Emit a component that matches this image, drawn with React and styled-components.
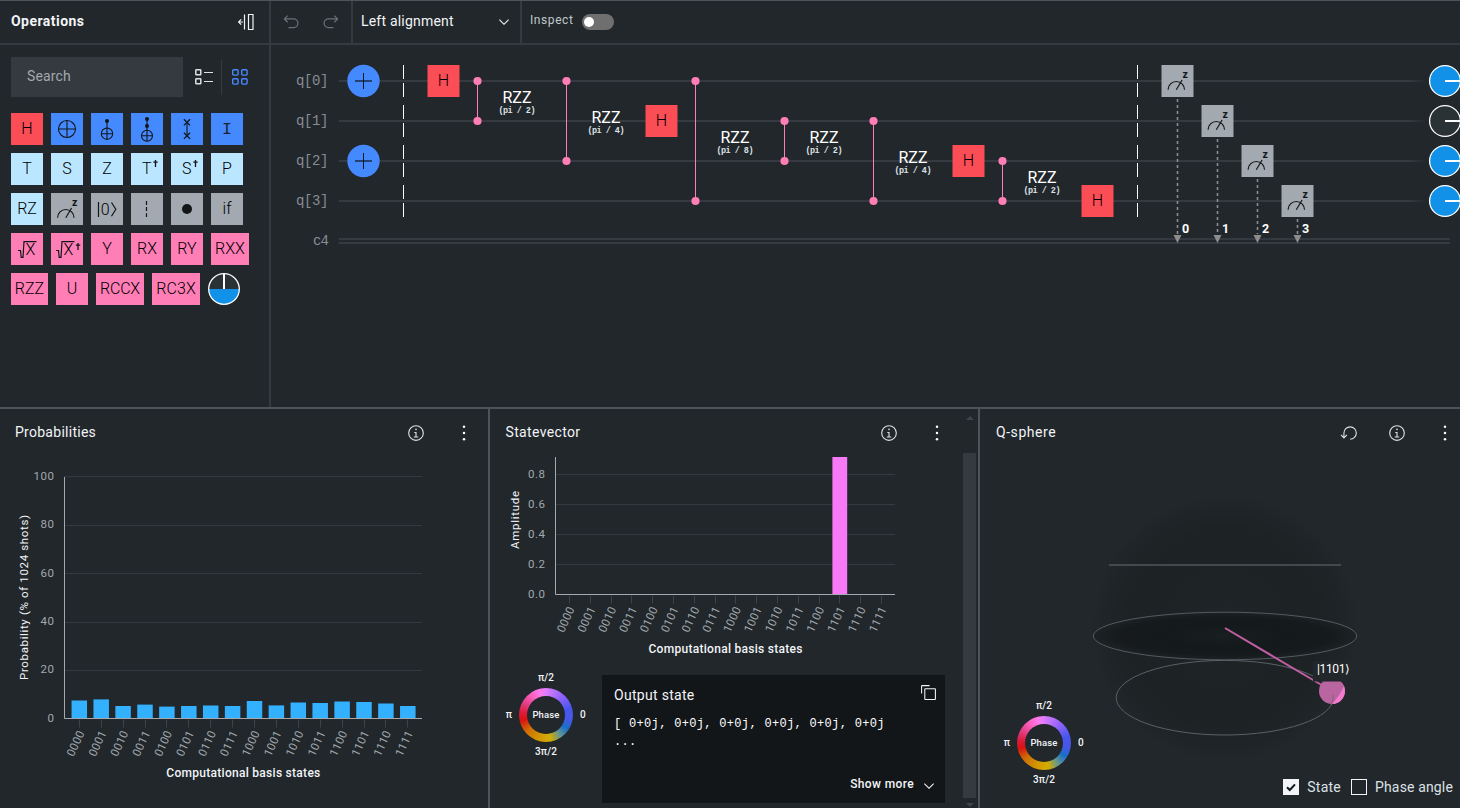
import React from "react";
import styled, { createGlobalStyle, css } from "styled-components";

const sans = `Roboto, "Liberation Sans", sans-serif`;
const mono = `"Liberation Mono", monospace`;

const GlobalStyle = createGlobalStyle`
  * { box-sizing: border-box; }
  body { margin: 0; background: #21272a; color: #f2f4f8; font-family: ${sans}; font-size: 14px; overflow: hidden; }
  svg { display: block; }
`;

const Page = styled.div`
  width: 1460px;
  height: 808px;
  display: flex;
  flex-direction: column;
  border-top: 1px solid #4d5358;
  overflow: hidden;
`;
const Workspace = styled.div`
  display: flex;
  height: 406px;
`;
const Sidebar = styled.aside`
  width: 271px;
  border-right: 2px solid #343a3f;
`;
const Bar = styled.header`
  height: 44px;
  display: flex;
  align-items: center;
  border-bottom: 2px solid #343a3f;
`;
const SidebarBar = styled(Bar)`
  justify-content: space-between;
  padding: 0 15px 1px 11px;
`;
const SidebarTitle = styled.h2`
  margin: 0;
  padding-bottom: 2px;
  font-size: 14px;
  font-weight: 700;
  letter-spacing: 0.46px;
`;
const Tools = styled.div`
  display: flex;
  align-items: center;
  padding: 12px 0 0 11px;
`;
const Search = styled.div`
  width: 172px;
  height: 40px;
  padding: 0 16px 2px;
  display: flex;
  align-items: center;
  background: #343a3f;
  color: #a2a9b0;
  letter-spacing: 0.16px;
`;
const ViewButton = styled.button`
  width: ${(p) => (p.$divider ? 39 : 38)}px;
  height: 35px;
  padding: 0 0 0 ${(p) => p.$left}px;
  border: 0;
  border-right: ${(p) => (p.$divider ? "1px solid #343a3f" : "0")};
  background: none;
  color: ${(p) => (p.$active ? "#4589ff" : "#dde1e6")};
`;
const Palette = styled.div`
  display: flex;
  flex-wrap: wrap;
  gap: 8px;
  width: 242px;
  margin: 16px 0 0 11px;
`;
const gateColors = {
  red: "#fa4d56",
  blue: "#4589ff",
  light: "#bae6ff",
  gray: "#a2a9b0",
  pink: "#ff7eb6",
};
const Gate = styled.div`
  width: ${(p) => p.$w || 32}px;
  height: 32px;
  padding-bottom: 1px;
  display: flex;
  align-items: center;
  justify-content: center;
  background: ${(p) => gateColors[p.$tone]};
  color: #000;
  font-size: 16px;
  font-weight: 300;
  letter-spacing: ${(p) => p.$ls || 0}px;
  ${(p) => p.$glyph && css`padding-bottom: 0;`}
`;
const Main = styled.main`
  width: 1189px;
`;
const IconButton = styled.button`
  width: 40px;
  height: 42px;
  padding: 0;
  border: 0;
  background: none;
  display: flex;
  align-items: center;
  justify-content: center;
  color: ${(p) => p.$color || "#dde1e6"};
`;
const History = styled.div`
  display: flex;
  width: 82px;
  height: 42px;
  border-right: 2px solid #343a3f;
`;
const Alignment = styled.div`
  width: 169px;
  height: 42px;
  display: flex;
  align-items: center;
  justify-content: space-between;
  padding: 0 8px 0 8px;
  border-right: 2px solid #343a3f;
  letter-spacing: 0.2px;
  span { padding-bottom: 2px; }
`;
const Inspect = styled.label`
  display: flex;
  align-items: center;
  gap: 8px;
  padding-left: 8px;
  font-size: 12px;
  letter-spacing: 0.58px;
  color: #c1c7cd;
  span { padding-bottom: 4px; margin-right: 1px; }
`;
const Toggle = styled.i`
  width: 32px;
  height: 16px;
  border-radius: 8px;
  background: #6f6f6f;
  padding: 3px 2px;
  &::after {
    content: "";
    display: block;
    width: 10px;
    height: 10px;
    border-radius: 50%;
    background: #fff;
  }
`;
const Results = styled.div`
  display: flex;
  height: 401px;
  border-top: 2px solid #4d5358;
`;
const Panel = styled.section`
  position: relative;
  display: flex;
  width: ${(p) => p.$w}px;
  border-right: ${(p) => (p.$last ? "0" : "2px solid #4d5358")};
  overflow: hidden;
`;
const PanelBody = styled.div`
  flex: 1;
  min-width: 0;
  display: flex;
  flex-direction: column;
`;
const PanelHeader = styled.header`
  height: 48px;
  display: flex;
  align-items: center;
  padding-left: ${(p) => p.$left}px;
  margin-right: ${(p) => p.$right || 0}px;
`;
const PanelTitle = styled.h3`
  flex: 1;
  margin: 0 0 2px;
  font-size: 14px;
  font-weight: 400;
  letter-spacing: ${(p) => p.$ls}px;
`;
const PanelButton = styled(IconButton)`
  width: 48px;
  height: 48px;
`;
const ScrollTrack = styled.div`
  width: 15px;
  display: flex;
  flex-direction: column;
  justify-content: space-between;
  padding: 7px 2px 1px 0;
`;
const Thumb = styled.div`
  flex: 1;
  margin: 33px 0 5px;
  background: #343a3f;
`;
const Arrow = styled.div`
  align-self: center;
  border: 4px solid transparent;
  border-${(p) => (p.$up ? "bottom" : "top")}-color: #3e454a;
  border-${(p) => (p.$up ? "top" : "bottom")}-width: 0;
`;
const OutputRow = styled.div`
  display: flex;
  padding: 15px 18px 0 9px;
`;
const Output = styled.div`
  width: 343px;
  height: 128px;
  margin-left: 9px;
  padding: 9px 8px 11px 12px;
  background: #121619;
  display: flex;
  flex-direction: column;
`;
const OutputHead = styled.div`
  display: flex;
  justify-content: space-between;
  height: 31px;
  line-height: 22px;
  letter-spacing: 0.3px;
`;
const Code = styled.pre`
  margin: 0;
  flex: 1;
  font: 12px/18px ${mono};
  letter-spacing: 0.32px;
  color: #fff;
`;
const ShowMore = styled.div`
  display: flex;
  justify-content: flex-end;
  align-items: center;
  gap: 7px;
  font-size: 12px;
  font-weight: 500;
  letter-spacing: 0.38px;
  svg { position: relative; top: 2px; }
`;
const Legend = styled.div`
  display: grid;
  grid-template: 20px 54px 20px / 20px 54px 20px;
  width: 94px;
  height: 94px;
  place-items: center;
  flex: none;
  font-size: 10px;
  margin-top: ${(p) => p.$mt || 0}px;
`;
const LegendText = styled.span`
  grid-column: ${(p) => p.$col};
  grid-row: ${(p) => p.$row};
  padding-bottom: 1px;
  letter-spacing: 0.1px;
  font-weight: 500;
`;
const Wheel = styled.div`
  grid-area: 2 / 2;
  width: 54px;
  height: 54px;
  padding: 8px;
  border-radius: 50%;
  background: conic-gradient(#dd7cff 0deg, #8d62fa 42deg, #4757ee 75deg, #4757e8 100deg, #186fc8 122deg, #64968f 145deg, #d4ac00 170deg, #d29a00 195deg, #cf6e05 230deg, #da1212 258deg, #dc1c3a 276deg, #e23f88 300deg, #ff66c8 328deg, #ff7aec 345deg, #dd7cff 360deg);
`;
const WheelHole = styled.div`
  width: 38px;
  height: 38px;
  padding-bottom: 1px;
  border-radius: 50%;
  background: #21272a;
  display: flex;
  align-items: center;
  justify-content: center;
  font-size: 9.5px;
  font-weight: 500;
  letter-spacing: 0.15px;
`;
const SphereLegend = styled.div`
  position: absolute;
  left: 17px;
  bottom: 18px;
`;
const Options = styled.div`
  position: absolute;
  right: 7px;
  bottom: 13px;
  display: flex;
  align-items: center;
  gap: 10px;
`;
const Option = styled.label`
  display: flex;
  align-items: center;
  gap: 8px;
  letter-spacing: ${(p) => p.$ls}px;
  color: #dde1e6;
`;
const Box = styled.span`
  width: 16px;
  height: 16px;
  border: 1px solid #f2f4f8;
  background: ${(p) => (p.$on ? "#f2f4f8" : "transparent")};
  color: #121619;
`;

const Icon = ({ size = 16, box = 32, children }) => (
  <svg width={size} height={size} viewBox={`0 0 ${box} ${box}`} fill="currentColor">{children}</svg>
);
const UndoIcon = () => (
  <Icon size={20}><path d="M20,10H7.8149l3.5874-3.5859L10,5,4,11,10,17l1.4023-1.415L7.8179,12H20a6,6,0,0,1,0,12H12v2h8a8,8,0,0,0,0-16Z" /></Icon>
);
const RedoIcon = () => (
  <Icon size={20}><path d="M12,10H24.1851L20.5977,6.4141,22,5,28,11,22,17,20.5977,15.5854,24.1821,12H12a6,6,0,0,0,0,12h8v2H12a8,8,0,0,1,0-16Z" /></Icon>
);
const ChevronIcon = () => (
  <Icon box={16}><path d="M8 11L3 6 3.7 5.3 8 9.6 12.3 5.3 13 6z" /></Icon>
);
const InfoIcon = () => (
  <Icon size={18}>
    <path d="M17 22V14H13V16H15V22H12V24H20V22zM16,8a1.5,1.5,0,1,0,1.5,1.5A1.5,1.5,0,0,0,16,8Z" />
    <path d="M16,30A14,14,0,1,1,30,16,14,14,0,0,1,16,30ZM16,4A12,12,0,1,0,28,16,12,12,0,0,0,16,4Z" />
  </Icon>
);
const ResetIcon = () => (
  <Icon size={18}><path d="M18,28A12,12,0,1,0,6,16v6.2L2.4,18.6,1,20l6,6,6-6-1.4-1.4L8,22.2V16H8A10,10,0,1,1,18,26Z" /></Icon>
);
const CopyIcon = () => (
  <Icon size={17}>
    <path d="M28,10V28H10V10H28m0-2H10a2,2,0,0,0-2,2V28a2,2,0,0,0,2,2H28a2,2,0,0,0,2-2V10a2,2,0,0,0-2-2Z" />
    <path d="M4,18H2V4A2,2,0,0,1,4,2H18V4H4Z" />
  </Icon>
);
const DotsIcon = () => (
  <Icon box={16}>{[1.7, 8, 14.3].map((y) => <circle key={y} cx="8" cy={y} r="1.25" />)}</Icon>
);
const CollapseIcon = () => (
  <Icon box={16}>
    <path d="M6.5 0.5V15.5M10.5 0.5H15V15.5H10.5ZM0.8 8H5M3.2 5.3L0.6 8L3.2 10.7" fill="none" stroke="currentColor" strokeWidth="1.2" />
  </Icon>
);
const ListIcon = () => (
  <svg width="18" height="16" fill="none" stroke="currentColor" strokeWidth="1.5">
    <rect x="0.8" y="0.8" width="5" height="5" rx="0.6" /><rect x="0.8" y="9.8" width="5" height="5" rx="0.6" />
    <path d="M9 3.5H18M9 12.5H18" strokeWidth="1" />
  </svg>
);
const GridIcon = () => (
  <svg width="16" height="16" fill="none" stroke="currentColor" strokeWidth="1.4">
    {[0.7, 9.7].map((x) => [0.7, 9.7].map((y) => <rect key={`${x}-${y}`} x={x} y={y} width="5.4" height="5.4" rx="1" />))}
  </svg>
);

const Glyph = ({ children }) => (
  <svg width="32" height="32" fill="none" stroke="#121619" strokeWidth="1.1">{children}</svg>
);
const Label = ({ x, y, size = 16, w, fill = "#121619", anchor = "middle", family = sans, weight = 400, transform, children }) => (
  <text x={x} y={y} fontFamily={family} fontSize={size} fontWeight={weight} fill={fill} stroke="none"
    textAnchor={anchor} textLength={w} lengthAdjust={w ? "spacing" : undefined} transform={transform}>{children}</text>
);
const Target = ({ cy, r }) => (
  <><circle cx="16" cy={cy} r={r} /><path d={`M${16 - r} ${cy}H${16 + r}M16 ${cy - r}V${cy + r}`} /></>
);
const Meter = () => (
  <>
    <path d="M6.6 24.7A8.2 8.2 0 0 1 23 24.7M14.8 24.7L20.6 15" fill="none" stroke="#121619" strokeWidth="1.2" />
    <Label x={23.6} y={13} size={10.5} weight={700}>z</Label>
  </>
);
const Dagger = ({ letter }) => (
  <Glyph><Label x={15.8} y={21.2} weight={300} fill="#000">{letter}</Label><path d="M24.5 7V14M22.3 9.2H26.7" strokeWidth="1.3" /></Glyph>
);

const gates = [
  { tone: "red", text: "H" },
  { tone: "blue", glyph: <Glyph><Target cy={16} r={8.5} /></Glyph> },
  { tone: "blue", glyph: <Glyph><circle cx="16" cy="8" r="2" fill="#121619" stroke="none" /><path d="M16 8V15" /><Target cy={20.7} r={5.7} /></Glyph> },
  { tone: "blue", glyph: <Glyph><circle cx="16" cy="6" r="2" fill="#121619" stroke="none" /><circle cx="16" cy="13" r="2" fill="#121619" stroke="none" /><path d="M16 6V18" /><Target cy={22.8} r={5.5} /></Glyph> },
  { tone: "blue", glyph: <Glyph><path d="M16 9.3V22.8" /><path d="M12.9 6.2l6.2 6.2m0-6.2l-6.2 6.2M12.9 19.7l6.2 6.2m0-6.2l-6.2 6.2" strokeWidth="1.3" /></Glyph> },
  { tone: "blue", glyph: <Glyph><Label x={16} y={21.2} size={16.5} family={mono} fill="#1c2433">I</Label></Glyph> },
  { tone: "light", text: "T" },
  { tone: "light", text: "S" },
  { tone: "light", text: "Z" },
  { tone: "light", glyph: <Dagger letter="T" /> },
  { tone: "light", glyph: <Dagger letter="S" /> },
  { tone: "light", text: "P" },
  { tone: "light", text: "RZ" },
  { tone: "gray", glyph: <Glyph><Meter /></Glyph> },
  { tone: "gray", glyph: <Glyph><path d="M7.5 9V24M20.5 9.5L24.8 16.3L20.5 23.2" strokeWidth="1.2" /><Label x={14.2} y={21.6} w={8} weight={300} fill="#000">0</Label></Glyph> },
  { tone: "gray", glyph: <Glyph><path d="M15.5 8V24" strokeDasharray="4 2.1" strokeWidth="1.2" /></Glyph> },
  { tone: "gray", glyph: <Glyph><circle cx="16" cy="16" r="5" fill="#121619" stroke="none" /></Glyph> },
  { tone: "gray", text: "if" },
  { tone: "pink", glyph: <Glyph><path d="M7 17.5H9.5L10.2 24.3H12L13 8.7H25.5" strokeWidth="1.2" /><Label x={19.3} y={21.8} weight={300} fill="#000">X</Label></Glyph> },
  { tone: "pink", glyph: <Glyph><path d="M5 17.5H7.5L8.2 24.3H10L11 8.7H23.5" strokeWidth="1.2" /><Label x={17.4} y={21.8} weight={300} fill="#000">X</Label><path d="M27 10V17M24.8 12.2H29.2" strokeWidth="1.3" /></Glyph> },
  { tone: "pink", text: "Y" },
  { tone: "pink", text: "RX" },
  { tone: "pink", text: "RY" },
  { tone: "pink", text: "RXX", w: 38 },
  { tone: "pink", text: "RZZ", w: 37 },
  { tone: "pink", text: "U" },
  { tone: "pink", text: "RCCX", w: 48, ls: -0.2 },
  { tone: "pink", text: "RC3X", w: 48, ls: 0.1 },
];
const PhaseDisk = () => (
  <svg width="32" height="32">
    <circle cx="16" cy="16" r="15.2" fill="#2b3236" />
    <path d="M0.8 16A15.2 15.2 0 0 0 31.2 16Z" fill="#1192e8" />
    <circle cx="16" cy="16" r="15.3" fill="none" stroke="#fff" strokeWidth="1.3" />
    <path d="M16 1V16" stroke="#fff" strokeWidth="2" />
  </svg>
);

const rows = [36, 76, 116, 156];
const hGates = [[172.5, 0], [390.5, 1], [697.5, 2], [826.5, 3]];
const rzz = [
  { x: 206.5, a: 0, b: 1, k: 2 },
  { x: 295.5, a: 0, b: 2, k: 4 },
  { x: 424.5, a: 0, b: 3, k: 8 },
  { x: 513.5, a: 1, b: 2, k: 2 },
  { x: 602.5, a: 1, b: 3, k: 4 },
  { x: 731.5, a: 2, b: 3, k: 2 },
];
const disks = [true, false, true, true];

const Circuit = () => (
  <svg width="1189" height="362">
    <defs>
      <linearGradient id="wire" gradientUnits="userSpaceOnUse" x1="0" x2="1156" y1="0" y2="0">
        <stop offset="0.985" stopColor="#343a3f" /><stop offset="1" stopColor="#343a3f" stopOpacity="0" />
      </linearGradient>
    </defs>
    {rows.map((y, i) => (
      <g key={y}>
        <Label x={25} y={y + 3.6} size={14} w={32.5} anchor="start" fill="#878d96" family={mono}>{`q[${i}]`}</Label>
        <rect x="68" y={y - 1} width="1088" height="2" fill="url(#wire)" />
      </g>
    ))}
    <Label x={42} y={200} size={14} w={16} anchor="start" fill="#878d96" family={mono}>c4</Label>
    <path d="M68 194H1179M68 198H1179" stroke="#343a3f" strokeWidth="2" />
    {[36, 116].map((y) => (
      <g key={y}>
        <circle cx="92.5" cy={y} r="16.2" fill="#4589ff" />
        <path d={`M84 ${y}H101`} stroke="#1d2f50" strokeWidth="1.6" />
        <path d={`M92.5 ${y - 8}V${y + 8}`} stroke="#121619" />
      </g>
    ))}
    {[132.5, 866.5].map((x) => rows.map((y) => (
      <path key={`${x}-${y}`} d={`M${x} ${y - 16}v14m0 4v14`} stroke="#fff" />
    )))}
    {hGates.map(([x, r]) => (
      <g key={x}>
        <rect x={x - 16} y={rows[r] - 16} width="32" height="32" fill="#fa4d56" />
        <Label x={x} y={rows[r] + 5.4} weight={300} fill="#000">H</Label>
      </g>
    ))}
    {rzz.map(({ x, a, b, k }) => {
      const mid = (rows[a] + rows[b]) / 2;
      return (
        <g key={x}>
          <path d={`M${x} ${rows[a]}V${rows[b]}`} stroke="#ff7eb6" />
          <circle cx={x} cy={rows[a]} r="4.1" fill="#ff7eb6" />
          <circle cx={x} cy={rows[b]} r="4.1" fill="#ff7eb6" />
          <Label x={x + 39.5} y={mid + 2} w={29} fill="#fff">RZZ</Label>
          <Label x={x + 39.5} y={mid + 11.7} size={8.5} w={37} weight={700} fill="#dde1e6" family={mono}>{`(pi / ${k})`}</Label>
        </g>
      );
    })}
    {rows.map((y, i) => {
      const x = 906.5 + 40 * i;
      return (
        <g key={y}>
          <path d={`M${x} ${y + 18}V189`} stroke="#8d8d8d" strokeWidth="1.6" strokeDasharray="3 3" />
          <path d={`M${x - 4} 190H${x + 4}L${x} 198Z`} fill="#8d8d8d" />
          <rect x={x - 16} y={y - 16} width="32" height="32" fill="#a2a9b0" />
          <g transform={`translate(${x - 16} ${y - 16})`}><Meter /></g>
          <Label x={x + 8} y={188.2} size={12.5} weight={700} fill="#fff">{i}</Label>
        </g>
      );
    })}
    {rows.map((y, i) => (
      <g key={y}>
        <circle cx="1174" cy={y} r="15.4" fill={disks[i] ? "#1192e8" : "#2b3236"} stroke="#fff" strokeWidth="1.3" />
        <path d={`M1174 ${y}H1190`} stroke="#fff" strokeWidth="2" />
      </g>
    ))}
  </svg>
);

const states = Array.from({ length: 16 }, (_, i) => i.toString(2).padStart(4, "0"));

/* Vertical bar chart over the sixteen basis states */
const BasisChart = ({ width, height, left, right, top, base, grid, tick0, pitch, barW, bars, color, titleX, titleY, side }) => (
  <svg width={width} height={height}>
    {grid.map(({ y, label, ly }) => (
      <g key={label}>
        <path d={`M${left} ${y}H${right}`} stroke="#343a3f" />
        <Label x={left - 10.5} y={ly + 4} size={11.5} w={label.length === 3 ? (label[1] === "." ? 17 : 20.5) : label.length * 6.7} anchor="end" fill="#a2a9b0">{label}</Label>
      </g>
    ))}
    {bars.map(([i, y]) => (
      <rect key={i} x={tick0 + pitch * i - barW / 2} y={y} width={barW} height={base - y} fill={color} />
    ))}
    <path d={`M${left} ${top}V${base}H${right}`} fill="none" stroke="#a2a9b0" />
    {states.map((s, i) => {
      const x = Math.floor(tick0 + pitch * i) + 0.5;
      return (
        <g key={s}>
          <path d={`M${x} ${base + 1}v8`} stroke="#3d4449" />
          <Label size={11.5} w={26.5} fill="#a2a9b0" transform={`translate(${tick0 + pitch * i - 3.8} ${base + 25}) rotate(-65)`} x={0} y={4}>{s}</Label>
        </g>
      );
    })}
    <Label x={titleX} y={titleY + 4} size={12} w={154} weight={500} fill="#f2f4f8">Computational basis states</Label>
    <Label size={11.5} w={side.w} fill="#f2f4f8" x={0} y={4} transform={`translate(${side.x} ${side.y}) rotate(-90)`}>{side.text}</Label>
  </svg>
);

const probTops = [700.5, 699.4, 706, 704.6, 706.6, 706, 705.5, 706, 701, 705.4, 702.5, 703, 701.5, 702, 703.5, 706].map((v, i) => [i, v - 457]);
const probGrid = [
  { y: 19.5, label: "100", ly: 19 }, { y: 68.5, label: "80", ly: 67 }, { y: 116.5, label: "60", ly: 116 },
  { y: 165.5, label: "40", ly: 164 }, { y: 213.5, label: "20", ly: 212 }, { y: 261.5, label: "0", ly: 261 },
];
const ampGrid = [
  { y: 17.5, label: "0.8", ly: 17 }, { y: 47.5, label: "0.6", ly: 47 }, { y: 77.5, label: "0.4", ly: 77 },
  { y: 107.5, label: "0.2", ly: 107 }, { y: 137.5, label: "0.0", ly: 137 },
];

const PhaseLegend = (p) => (
  <Legend {...p}>
    <LegendText $col={2} $row={1}>π/2</LegendText>
    <LegendText $col={1} $row={2}>π</LegendText>
    <Wheel><WheelHole>Phase</WheelHole></Wheel>
    <LegendText $col={3} $row={2}>0</LegendText>
    <LegendText $col={2} $row={3}>3π/2</LegendText>
  </Legend>
);

const Sphere = () => (
  <svg width="480" height="351">
    <defs>
      <radialGradient id="ball">
        <stop offset="0" stopColor="#000" stopOpacity="0.05" />
        <stop offset="0.35" stopColor="#000" stopOpacity="0.11" />
        <stop offset="0.7" stopColor="#000" stopOpacity="0.14" />
        <stop offset="0.9" stopColor="#000" stopOpacity="0.07" />
        <stop offset="1" stopColor="#000" stopOpacity="0.015" />
      </radialGradient>
      <radialGradient id="disc">
        <stop offset="0" stopColor="#191e20" />
        <stop offset="0.45" stopColor="#14191b" />
        <stop offset="0.8" stopColor="#161a1d" />
        <stop offset="1" stopColor="#1d2225" />
      </radialGradient>
    </defs>
    <circle cx="245" cy="171" r="132" fill="url(#ball)" />
    <ellipse cx="245" cy="179" rx="131.7" ry="23.8" fill="url(#disc)" stroke="#5a6066" strokeWidth="0.9" />
    <ellipse cx="244.8" cy="240.7" rx="108.6" ry="37.3" fill="none" stroke="#5a6066" strokeWidth="1" />
    <path d="M129 108H361" stroke="#43494f" strokeWidth="2" />
    <path d="M245 171L345 230" stroke="#c05fa3" strokeWidth="2" />
    <circle cx="352" cy="234" r="13" fill="#b9659f" />
    <path d="M364 229A13 13 0 0 1 352 247Q359 240 364 229Z" fill="#f47ad0" />
    <path d="M353.3 238Q353.5 243 351 248" stroke="#7a6478" fill="none" />
    <rect x="333" y="204" width="41" height="20.5" fill="#21272a" />
    <Label x={337} y={216.3} size={12} w={33} anchor="start" fill="#fff">|1101⟩</Label>
  </svg>
);

export default function App() {
  return (
    <Page>
      <GlobalStyle />
      <Workspace>
        <Sidebar>
          <SidebarBar>
            <SidebarTitle>Operations</SidebarTitle>
            <CollapseIcon />
          </SidebarBar>
          <Tools>
            <Search>Search</Search>
            <ViewButton $left={12} $divider><ListIcon /></ViewButton>
            <ViewButton $left={10} $active><GridIcon /></ViewButton>
          </Tools>
          <Palette>
            {gates.map((g, i) => (
              <Gate key={i} $tone={g.tone} $w={g.w} $ls={g.ls} $glyph={!!g.glyph}>{g.glyph || g.text}</Gate>
            ))}
            <PhaseDisk />
          </Palette>
        </Sidebar>
        <Main>
          <Bar>
            <History>
              <IconButton $color="#697077"><UndoIcon /></IconButton>
              <IconButton $color="#697077"><RedoIcon /></IconButton>
            </History>
            <Alignment><span>Left alignment</span><ChevronIcon /></Alignment>
            <Inspect><span>Inspect</span><Toggle /></Inspect>
          </Bar>
          <Circuit />
        </Main>
      </Workspace>
      <Results>
        <Panel $w={490}>
          <PanelBody>
            <PanelHeader $left={15}>
              <PanelTitle $ls={0.27}>Probabilities</PanelTitle>
              <PanelButton><InfoIcon /></PanelButton>
              <PanelButton $color="#fff"><DotsIcon /></PanelButton>
            </PanelHeader>
            <BasisChart width={488} height={351} left={64.5} right={422} top={20} base={261.5} grid={probGrid}
              tick0={79.3} pitch={21.9} barW={15.5} bars={probTops} color="#33b1ff" titleX={243.3} titleY={315.5}
              side={{ text: "Probability (% of 1024 shots)", x: 24, y: 140.5, w: 165 }} />
          </PanelBody>
        </Panel>
        <Panel $w={490}>
          <PanelBody>
            <PanelHeader $left={15.5} $right={2}>
              <PanelTitle $ls={0.35}>Statevector</PanelTitle>
              <PanelButton><InfoIcon /></PanelButton>
              <PanelButton $color="#fff"><DotsIcon /></PanelButton>
            </PanelHeader>
            <BasisChart width={473} height={203} left={65.5} right={405} top={0} base={137.5} grid={ampGrid}
              tick0={79.4} pitch={20.8} barW={14.8} bars={[[13, 0]]} color="#f879f6" titleX={235.5} titleY={192}
              side={{ text: "Amplitude", x: 25, y: 63, w: 58 }} />
            <OutputRow>
              <PhaseLegend $mt={-7} />
              <Output>
                <OutputHead>Output state<CopyIcon /></OutputHead>
                <Code>{"[ 0+0j, 0+0j, 0+0j, 0+0j, 0+0j, 0+0j\n..."}</Code>
                <ShowMore>Show more<ChevronIcon /></ShowMore>
              </Output>
            </OutputRow>
          </PanelBody>
          <ScrollTrack><Arrow $up /><Thumb /><Arrow /></ScrollTrack>
        </Panel>
        <Panel $w={480} $last>
          <PanelBody>
            <PanelHeader $left={16} $right={-9}>
              <PanelTitle $ls={0.55}>Q-sphere</PanelTitle>
              <PanelButton><ResetIcon /></PanelButton>
              <PanelButton><InfoIcon /></PanelButton>
              <PanelButton $color="#fff"><DotsIcon /></PanelButton>
            </PanelHeader>
            <Sphere />
          </PanelBody>
          <SphereLegend><PhaseLegend /></SphereLegend>
          <Options>
            <Option $ls={0.25}>
              <Box $on>
                <svg width="14" height="14" fill="none" stroke="currentColor" strokeWidth="2"><path d="M3 7.2L5.8 10L11 4.4" /></svg>
              </Box>
              State
            </Option>
            <Option $ls={0.15}><Box />Phase angle</Option>
          </Options>
        </Panel>
      </Results>
    </Page>
  );
}
